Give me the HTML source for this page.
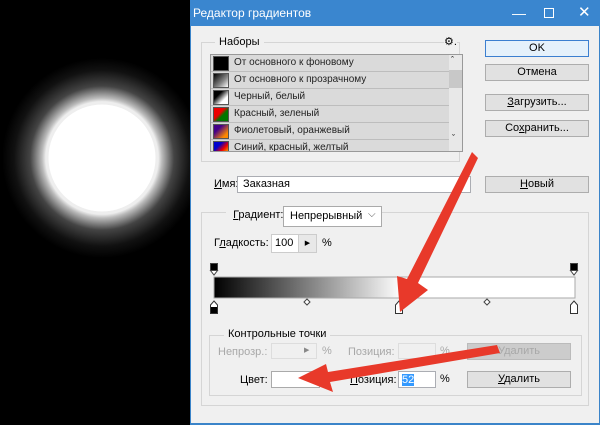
<!DOCTYPE html>
<html><head><meta charset="utf-8"><style>
*{box-sizing:border-box;margin:0;padding:0}
body{width:600px;height:425px;position:relative;overflow:hidden;background:#000;font-family:"Liberation Sans","DejaVu Sans",sans-serif;font-size:11px;color:#000}
.a{position:absolute}
#dlg{left:190px;top:0;width:410px;height:425px;background:#f0f0f0;border:1px solid #3b84c9;border-top:none;border-bottom:2px solid #3b84c9}
.title{left:190px;top:0;width:410px;height:26px;background:#3a86cf;color:#fff;font-size:12px;line-height:26px;padding-left:3px}
.btn{position:absolute;background:#e1e1e1;border:1px solid #adadad;text-align:center;line-height:15px;font-size:11px}
.grp{position:absolute;border:1px solid #d5d5d5}
.lbl{position:absolute;background:#f0f0f0;padding:0 4px;font-size:11px}
.inp{position:absolute;background:#fff;border:1px solid #abadb3}
.row{position:absolute;left:211px;width:238px;height:17px;background:#dadada;border-bottom:1px solid #bdbdbd}
.sw{position:absolute;left:2px;top:1px;width:16px;height:15px;border:1px solid #555}
.row span{position:absolute;left:23px;top:2px;font-size:10px;color:#222}
.t{position:absolute;font-size:11px;white-space:nowrap}
.dis{color:#a8a8a8}
</style></head><body>
<svg class="a" style="left:0;top:0" width="190" height="425">
<defs><radialGradient id="g" cx="102" cy="158" r="100" gradientUnits="userSpaceOnUse">
<stop offset="0" stop-color="#fff"/><stop offset="0.55" stop-color="#fff"/><stop offset="0.6" stop-color="#bbb"/><stop offset="0.72" stop-color="#444"/><stop offset="0.88" stop-color="#111"/><stop offset="1" stop-color="#000"/></radialGradient></defs>
<rect width="190" height="425" fill="#000"/>
<circle cx="102" cy="158" r="100" fill="url(#g)"/>
<circle cx="102" cy="158" r="55" fill="none" stroke="#eee" stroke-width="3"/>
</svg>
<div id="dlg" class="a"></div>
<div class="title a">Редактор градиентов
<span style="position:absolute;left:322px;top:0;font-size:14px">—</span>
<span style="position:absolute;left:354px;top:8px;width:10px;height:10px;border:1px solid #fff"></span>
<span style="position:absolute;left:388px;top:0;font-size:15px">✕</span></div>

<div class="grp" style="left:201px;top:42px;width:259px;height:120px"></div>
<div class="lbl" style="left:215px;top:36px">Наборы</div>
<div class="t" style="left:444px;top:35px;font-size:11px;background:#f0f0f0">⚙.</div>
<div class="a" style="left:210px;top:54px;width:253px;height:98px;border:1px solid #999;background:#dadada;overflow:hidden">
</div>
<div class="a" style="left:211px;top:55px;width:251px;height:96px;overflow:hidden">
<div class="row" style="left:0;top:0"><div class="sw" style="background:#000"></div><span>От основного к фоновому</span></div>
<div class="row" style="left:0;top:17px"><div class="sw" style="background:linear-gradient(135deg,#000,#888 60%,#fff)"></div><span>От основного к прозрачному</span></div>
<div class="row" style="left:0;top:34px"><div class="sw" style="background:linear-gradient(135deg,#000 30%,#fff 70%)"></div><span>Черный, белый</span></div>
<div class="row" style="left:0;top:51px"><div class="sw" style="background:linear-gradient(135deg,#e00 40%,#070 60%)"></div><span>Красный, зеленый</span></div>
<div class="row" style="left:0;top:68px"><div class="sw" style="background:linear-gradient(135deg,#408 30%,#f80 80%)"></div><span>Фиолетовый, оранжевый</span></div>
<div class="row" style="left:0;top:85px"><div class="sw" style="background:linear-gradient(135deg,#00c 30%,#e00 60%,#fe0)"></div><span>Синий, красный, желтый</span></div>
<div class="a" style="left:238px;top:0;width:13px;height:96px;background:#e8e8e8"><div style="position:absolute;left:0;top:15px;width:13px;height:18px;background:#c8c8c8"></div>
<div style="position:absolute;left:2px;top:0;font-size:9px">ˆ</div><div style="position:absolute;left:3px;top:78px;font-size:9px">ˇ</div></div>
</div>

<div class="btn" style="left:485px;top:40px;width:104px;height:17px;border:1px solid #3c7fd0;background:#e5f1fb">OK</div>
<div class="btn" style="left:485px;top:64px;width:104px;height:17px">Отмена</div>
<div class="btn" style="left:485px;top:94px;width:104px;height:17px"><u>З</u>агрузить...</div>
<div class="btn" style="left:485px;top:120px;width:104px;height:17px">Со<u>х</u>ранить...</div>

<div class="t" style="left:214px;top:178px"><u>И</u>мя:</div>
<div class="inp" style="left:237px;top:176px;width:234px;height:17px"><span style="position:absolute;left:5px;top:1px">Заказная</span></div>
<div class="btn" style="left:485px;top:176px;width:104px;height:17px"><u>Н</u>овый</div>

<div class="grp" style="left:201px;top:212px;width:388px;height:194px"></div>
<div class="lbl" style="left:226px;top:209px;height:14px;padding-right:1px">&nbsp;<u>Г</u>радиент:</div>
<div class="inp" style="left:283px;top:206px;width:99px;height:21px;border-color:#aaa"><span style="position:absolute;left:6px;top:3px">Непрерывный</span><span style="position:absolute;left:84px;top:2px;font-size:10px;color:#555">⌵</span></div>
<div class="t" style="left:214px;top:237px">Г<u>л</u>адкость:</div>
<div class="inp" style="left:271px;top:234px;width:46px;height:19px;border-color:#ccc"><span style="position:absolute;left:3px;top:2px">100</span><div style="position:absolute;left:26px;top:0;width:18px;height:17px;background:#e8e8e8;border-left:1px solid #ccc;font-size:7px;text-align:center;line-height:17px">▶</div></div>
<div class="t" style="left:322px;top:237px">%</div>

<svg class="a" style="left:205px;top:258px" width="385" height="60">
<defs><linearGradient id="bw" x1="0" x2="1"><stop offset="0" stop-color="#000"/><stop offset="0.52" stop-color="#fff"/><stop offset="1" stop-color="#fff"/></linearGradient></defs>
<rect x="9" y="19" width="361" height="21" fill="url(#bw)" stroke="#aaa"/>
<g fill="#000" stroke="#444"><rect x="5.5" y="5.5" width="7" height="7"/><rect x="365.5" y="5.5" width="7" height="7"/></g>
<g fill="#fff" stroke="#444"><path d="M5.5 12.5 L12.5 12.5 L9 17z"/><path d="M365.5 12.5 L372.5 12.5 L369 17z"/></g>
<g stroke="#333" fill="#fff"><path d="M9 43 L12.5 47 L12.5 55.5 L5.5 55.5 L5.5 47z"/><path d="M194 43 L197.5 47 L197.5 55.5 L190.5 55.5 L190.5 47z"/><path d="M369 43 L372.5 47 L372.5 55.5 L365.5 55.5 L365.5 47z"/></g>
<rect x="6" y="49" width="6" height="6" fill="#000"/>
<g fill="#fff" stroke="#444"><path d="M102 41 L105 44 L102 47 L99 44z"/><path d="M282 41 L285 44 L282 47 L279 44z"/></g>
</svg>

<div class="grp" style="left:209px;top:335px;width:373px;height:61px"></div>
<div class="lbl" style="left:224px;top:328px">Контрольные точки</div>
<div class="t dis" style="left:218px;top:346px">Непрозр.:</div>
<div class="inp" style="left:271px;top:343px;width:46px;height:16px;border-color:#ddd;background:#f0f0f0"><span style="position:absolute;left:32px;top:2px;font-size:7px;color:#888">▶</span></div>
<div class="t dis" style="left:322px;top:345px">%</div>
<div class="t dis" style="left:348px;top:346px">Позиция:</div>
<div class="inp" style="left:398px;top:343px;width:38px;height:16px;border-color:#ddd;background:#f0f0f0"></div>
<div class="t dis" style="left:440px;top:345px">%</div>
<div class="btn dis" style="left:467px;top:343px;width:104px;height:17px;background:#ccc;border-color:#bbb">Удалить</div>

<div class="t" style="left:240px;top:374px">Цвет:</div>
<div class="inp" style="left:271px;top:371px;width:49px;height:17px;border-color:#aaa"></div>
<div class="t" style="left:350px;top:374px"><u>П</u>озиция:</div>
<div class="inp" style="left:398px;top:371px;width:38px;height:17px"><span style="position:absolute;left:3px;top:2px;background:#3399ff;color:#fff;line-height:12px">52</span></div>
<div class="t" style="left:440px;top:373px">%</div>
<div class="btn" style="left:467px;top:371px;width:104px;height:17px"><u>У</u>далить</div>

<svg class="a" style="left:0;top:0" width="600" height="425">
<g fill="#e8392a">
<path d="M472 152 L478 158 L418 283 L428 290 L400 312 L397 276 L407 279 Z"/>
<path d="M497 345 L500 353 L330 382 L333 392 L298 378 L326 364 L328 372 Z"/>
</g>
</svg>
</body></html>
